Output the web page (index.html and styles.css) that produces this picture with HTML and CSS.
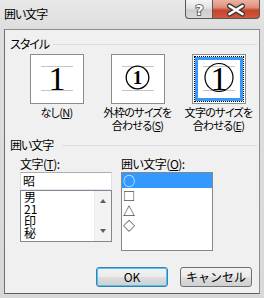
FILE: index.html
```html
<!DOCTYPE html>
<html lang="ja">
<head>
<meta charset="utf-8">
<title>囲い文字</title>
<link rel="stylesheet" href="styles.css">
</head>
<body>
<div class="window">
  <div class="titlebar">
    <span class="title">囲い文字</span>
    <div class="caption">
      <div class="cbtn help">
        <svg width="27" height="19" viewBox="0 0 27 19"><text x="14" y="15.5" text-anchor="middle" class="qmark">?</text></svg>
      </div>
      <div class="cbtn close">
        <svg width="46" height="19" viewBox="0 0 46 19">
          <path d="M16.5 6L29.5 14M29.5 6L16.5 14" stroke="#3b3b3b" stroke-width="5" stroke-linecap="round"/>
          <path d="M16.5 6L29.5 14M29.5 6L16.5 14" stroke="#fff" stroke-width="2.6" stroke-linecap="round"/>
        </svg>
      </div>
    </div>
  </div>
  <div class="client">
    <div class="ghead"><span>スタイル</span><i class="rule"></i></div>
    <div class="options">
      <div class="opt">
        <div class="box">
          <svg width="52" height="48" viewBox="0 0 52 48">
            <path d="M10 11.5H42M10 35.5H42" stroke="#c4c4c4"/>
            <text x="26" y="35" text-anchor="middle" class="big1">1</text>
          </svg>
        </div>
        <div class="olabel">なし(<u>N</u>)</div>
      </div>
      <div class="opt">
        <div class="box">
          <svg width="52" height="48" viewBox="0 0 52 48">
            <path d="M10 11.5H42M10 35.5H42" stroke="#c4c4c4"/>
            <circle cx="25.5" cy="22.5" r="11.3" fill="#fff" stroke="#000" stroke-width="1.3"/>
            <text x="25.5" y="29" text-anchor="middle" class="small1">1</text>
          </svg>
        </div>
        <div class="olabel">外枠のサイズを<br>合わせる(<u>S</u>)</div>
      </div>
      <div class="opt sel">
        <div class="box">
          <div class="focus"></div>
          <svg width="52" height="48" viewBox="0 0 52 48">
            <path d="M10 11.5H42M10 35.5H42" stroke="#c4c4c4"/>
            <circle cx="26" cy="22.5" r="14" fill="none" stroke="#000" stroke-width="1.2"/>
            <text x="26" y="35" text-anchor="middle" class="big1">1</text>
          </svg>
        </div>
        <div class="olabel">文字のサイズを<br>合わせる(<u>E</u>)</div>
      </div>
    </div>
    <div class="ghead g2"><span>囲い文字</span><i class="rule"></i></div>
    <div class="fields">
      <div class="col">
        <div class="flabel">文字(<u>T</u>):</div>
        <div class="input">昭</div>
        <div class="list1">
          <div class="items">
            <div>男</div>
            <div>21</div>
            <div>印</div>
            <div>秘</div>
          </div>
          <div class="vscroll"><span class="arrow up"></span><span class="arrow down"></span></div>
        </div>
      </div>
      <div class="col">
        <div class="flabel">囲い文字(<u>O</u>):</div>
        <div class="list2">
          <div class="row selected">○</div>
          <div class="row">□</div>
          <div class="row">△</div>
          <div class="row">◇</div>
        </div>
      </div>
    </div>
    <div class="buttons">
      <button class="btn default">OK</button>
      <button class="btn">キャンセル</button>
    </div>
  </div>
</div>
</body>
</html>
```
FILE: styles.css
```css
* { box-sizing: border-box; }
html, body {
  margin: 0;
  padding: 0;
  background: #d9d9d9;
}
body {
  font-family: "Noto Sans CJK JP", "Noto Sans", sans-serif;
  font-size: 12px;
  color: #000;
  font-feature-settings: "palt" 1;
}
.window {
  width: 264px;
  height: 298px;
  display: flex;
  flex-direction: column;
  background: linear-gradient(#e8e8e8 0, #dedede 30px, #d8d8d8 100%);
  overflow: hidden;
}
.titlebar {
  height: 29px;
  display: flex;
  align-items: flex-start;
  flex: none;
}
.title {
  margin: 7px 0 0 4px;
  font-size: 12px;
  line-height: 14px;
  letter-spacing: -1px;
}
.caption {
  margin-left: auto;
  margin-right: 4px;
  display: flex;
  height: 19px;
}
.cbtn {
  height: 19px;
  border: 1px solid #575757;
  border-top: none;
  display: flex;
}
.help {
  width: 28px;
  border-radius: 0 0 0 4px;
  background: linear-gradient(#f4f4f4 0, #e2e2e2 45%, #cdcdcd 55%, #d8d8d8 100%);
}
.close {
  width: 47px;
  border-left: none;
  border-radius: 0 0 4px 0;
  background: linear-gradient(#eab3a4 0, #e0917c 40%, #c9432a 58%, #d0573f 100%);
}
.qmark {
  font-family: "DejaVu Sans", sans-serif;
  font-weight: bold;
  font-size: 15px;
  fill: #fff;
  stroke: #4a4a4a;
  stroke-width: 1.6px;
  paint-order: stroke;
}
.client {
  margin: 0 4px 4px;
  height: 265px;
  border: 1px solid #8e8e8e;
  border-left-color: #6e6e6e;
  border-bottom-color: #5e5e5e;
  background: #f0f0f0;
  display: flex;
  flex-direction: column;
}
.ghead {
  margin: 7px 2px 0 5px;
  height: 13px;
  display: flex;
  align-items: center;
  gap: 4px;
  line-height: 13px;
}
.ghead span { letter-spacing: -1px; }
.ghead .rule {
  flex: 1;
  height: 1px;
  margin-top: 2px;
  background: #d5dfe5;
}
.ghead.g2 { margin-top: 6px; gap: 9px; }
.options {
  margin: 4px 0 0 11px;
  display: grid;
  grid-template-columns: repeat(3, 81px);
}
.opt {
  display: flex;
  flex-direction: column;
  align-items: center;
}
.box {
  width: 54px;
  height: 50px;
  border: 1px solid #8c8c8c;
  background: #fff;
  display: grid;
}
.box > * { grid-area: 1 / 1; }
.focus {
  margin: 1px;
  border: 1px dotted #000;
  box-shadow: inset 0 0 0 3px #3399ff;
}
.big1 {
  font-family: "Liberation Serif", serif;
  font-size: 34px;
  fill: #000;
}
.small1 {
  font-family: "Liberation Serif", serif;
  font-weight: bold;
  font-size: 19px;
  fill: #000;
}
.olabel {
  margin-top: 2px;
  font-size: 11px;
  line-height: 13px;
  text-align: center;
  white-space: nowrap;
  letter-spacing: -0.7px;
}
u { text-underline-offset: 1px; }
.fields {
  margin: 6px 0 0 15px;
  display: flex;
  gap: 9px;
  align-items: flex-start;
}
.col {
  width: 92px;
  display: flex;
  flex-direction: column;
}
.flabel {
  line-height: 13px;
  height: 13px;
  white-space: nowrap;
  letter-spacing: -0.5px;
}
.input {
  margin-top: 2px;
  height: 18px;
  border: 1px solid #abadb3;
  border-left-color: #d6d8de;
  border-right-color: #dde0e6;
  border-bottom-color: #e3e9ef;
  background: #fff;
  padding-left: 2px;
  line-height: 16px;
}
.list1 {
  height: 52px;
  border: 1px solid #828790;
  background: #fff;
  display: flex;
}
.items {
  flex: 1;
  padding-left: 3px;
}
.items div {
  height: 12px;
  line-height: 12px;
}
.vscroll {
  width: 17px;
  background: #f3f3f3;
  border-left: 1px solid #ececec;
  display: flex;
  flex-direction: column;
  justify-content: space-between;
  align-items: center;
  padding: 8px 0 8px;
}
.arrow {
  width: 0;
  height: 0;
  border-left: 3.5px solid transparent;
  border-right: 3.5px solid transparent;
}
.arrow.up { border-bottom: 4px solid #5d5d5d; }
.arrow.down { border-top: 4px solid #5d5d5d; }
.list2 {
  margin-top: 2px;
  height: 79px;
  border: 1px solid #828790;
  background: #fff;
}
.row {
  height: 15px;
  line-height: 15px;
  padding-left: 1px;
}
.row.selected {
  background: #3399ff;
  color: #fff;
}
.buttons {
  margin-top: 16px;
  padding-right: 7px;
  display: flex;
  justify-content: flex-end;
  gap: 12px;
}
.btn {
  width: 72px;
  height: 20px;
  padding: 0;
  border: 1px solid #707070;
  border-radius: 3px;
  background: linear-gradient(#f2f2f2 0, #ebebeb 48%, #dddddd 52%, #cfcfcf 100%);
  font-family: "Noto Sans CJK JP", "Noto Sans", sans-serif;
  font-size: 12px;
  color: #000;
  line-height: 16px;
}
.btn.default {
  border-color: #3c7fb1;
  box-shadow: inset 0 0 0 1px #4ec3f5;
}
```
